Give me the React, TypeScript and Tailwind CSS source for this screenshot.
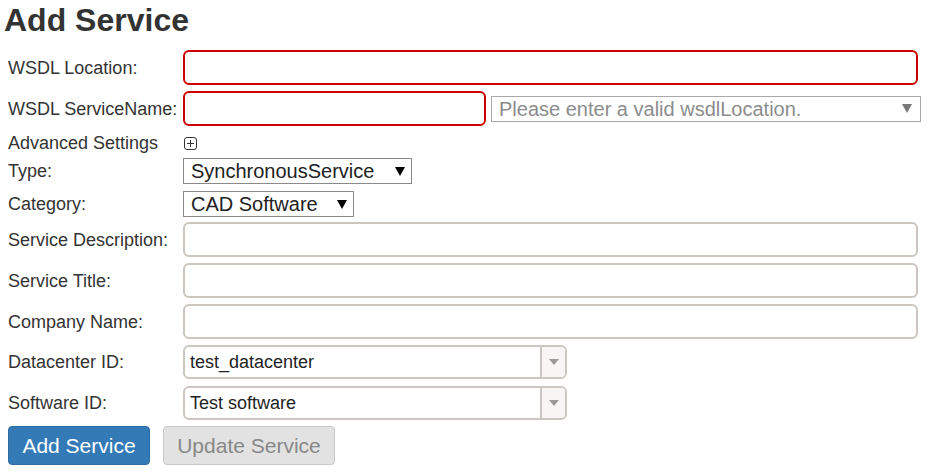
const font = "font-['Liberation_Sans',Arial,sans-serif]";

function Label({ children }: { children: React.ReactNode }) {
  return <div className="w-[183px] shrink-0 pl-2 text-[18px] leading-[20px] text-[#333]">{children}</div>;
}

function TextInput({ invalid, width }: { invalid?: boolean; width: string }) {
  return (
    <div
      className={`h-[35px] ${width} rounded-[6px] border-2 bg-white ${
        invalid ? "border-[#cc0000]" : "border-[#ccc6c0]"
      }`}
    />
  );
}

function NativeSelect({ value, width }: { value: string; width: string }) {
  return (
    <div className={`flex h-[26px] ${width} items-center justify-between border border-[#8a8a8a] bg-white pl-[7px] pr-[6px]`}>
      <span className="text-[20px] leading-[24px] text-[#222]">{value}</span>
      <svg width="10" height="9" viewBox="0 0 10 9">
        <path d="M0 0 L10 0 L5 9 Z" fill="#000" />
      </svg>
    </div>
  );
}

function Combo({ value }: { value: string }) {
  return (
    <div className="flex h-[34px] w-[384px] rounded-[6px] border-2 border-[#ccc6c0] bg-white">
      <div className="flex flex-1 items-center pl-[5px] text-[18px] text-[#222]">{value}</div>
      <div className="flex w-[25px] items-center justify-center rounded-r-[4px] border-l-2 border-[#ccc6c0] bg-[#f7f6f5]">
        <svg width="10" height="6" viewBox="0 0 10 6">
          <path d="M0 0 L10 0 L5 6 Z" fill="#999" />
        </svg>
      </div>
    </div>
  );
}

export default function App() {
  return (
    <div className={`${font} w-[930px] h-[473px] bg-white overflow-hidden`}>
      <h1 className="mt-[2px] pl-1 text-[32px] font-bold leading-[36px] text-[#333]">Add Service</h1>

      {/* WSDL Location */}
      <div className="mt-[12px] flex items-center">
        <Label>WSDL Location:</Label>
        <TextInput invalid width="w-[735px]" />
      </div>

      {/* WSDL ServiceName */}
      <div className="mt-[6px] flex items-center">
        <Label>WSDL ServiceName:</Label>
        <TextInput invalid width="w-[303px]" />
        <div className="ml-[5px] flex h-[26px] w-[430px] items-center justify-between border border-[#a9a9a9] bg-white pl-[7px] pr-[8px]">
          <span className="text-[20px] leading-[24px] text-[#8c8c8c]">Please enter a valid wsdlLocation.</span>
          <svg width="10" height="9" viewBox="0 0 10 9">
            <path d="M0 0 L10 0 L5 9 Z" fill="#777" />
          </svg>
        </div>
      </div>

      {/* Advanced */}
      <div className="flex h-[32px] items-center pt-[2px]">
        <Label>Advanced Settings</Label>
        <svg width="13" height="13" viewBox="0 0 13 13" className="ml-[1px]">
          <rect x="0.5" y="0.5" width="12" height="12" rx="2.5" fill="none" stroke="#333" />
          <path d="M6.5 3 V10 M3 6.5 H10" stroke="#333" strokeWidth="1" />
        </svg>
      </div>

      {/* Type */}
      <div className="flex items-center">
        <Label>Type:</Label>
        <NativeSelect value="SynchronousService" width="w-[229px]" />
      </div>

      {/* Category */}
      <div className="mt-[7px] flex items-center">
        <Label>Category:</Label>
        <NativeSelect value="CAD Software" width="w-[171px]" />
      </div>

      <div className="mt-[5px] flex items-center">
        <Label>Service Description:</Label>
        <TextInput width="w-[735px]" />
      </div>
      <div className="mt-[6px] flex items-center">
        <Label>Service Title:</Label>
        <TextInput width="w-[735px]" />
      </div>
      <div className="mt-[6px] flex items-center">
        <Label>Company Name:</Label>
        <TextInput width="w-[735px]" />
      </div>

      <div className="mt-[6px] flex items-center">
        <Label>Datacenter ID:</Label>
        <Combo value="test_datacenter" />
      </div>
      <div className="mt-[7px] flex items-center">
        <Label>Software ID:</Label>
        <Combo value="Test software" />
      </div>

      <div className="mt-[6px] flex gap-[13px] pl-2">
        <button className="h-[39px] w-[142px] rounded-[4px] border border-[#2e6da4] bg-[#337ab7] text-[21px] text-white">
          Add Service
        </button>
        <button className="h-[39px] w-[172px] rounded-[4px] border border-[#c8c8c8] bg-[#e2e2e2] text-[21px] text-[#888]">
          Update Service
        </button>
      </div>
    </div>
  );
}
